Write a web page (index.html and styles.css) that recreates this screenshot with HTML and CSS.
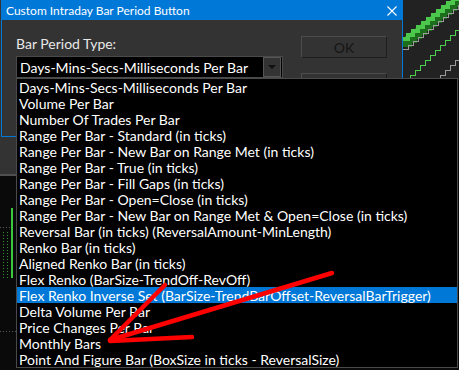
FILE: index.html
```html
<!DOCTYPE html>
<html lang="en">
  <head>
    <meta charset="UTF-8" />
    <meta name="viewport" content="width=device-width, initial-scale=1.0" />
    <title>Custom Intraday Bar Period Button</title>
    <link rel="stylesheet" href="styles.css">
  </head>
  <body>
    <div class="screen">
      <!-- chart window behind the dialog -->
      <svg class="chart" width="459" height="370" viewBox="0 0 459 370" shape-rendering="crispEdges">
        <rect x="0" y="0" width="459" height="370" fill="#0a0a0a" />
        <rect x="403" y="0" width="56" height="80" fill="#222222" />
        <rect x="0" y="0" width="403" height="174" fill="#333333" />
        <rect x="0" y="174" width="403" height="2" fill="#505050" />
        <rect x="11" y="208" width="2" height="70" fill="#3cc83c" />
        <line x1="3.5" y1="232" x2="3.5" y2="278" stroke="#2f8f2f" stroke-dasharray="1 2" />
        <line x1="7.5" y1="232" x2="7.5" y2="278" stroke="#2f8f2f" stroke-dasharray="1 2" />
        <line x1="0" y1="227.5" x2="10" y2="227.5" stroke="#5a5a5a" stroke-dasharray="1 2" />
        <line x1="0" y1="331.5" x2="16" y2="331.5" stroke="#5a5a5a" stroke-dasharray="1 2" />
        <path d="M403 43h5v-4h5v-4h5v-4h5v-4h5v-4h5v-4h5v-4h5v-4h5v-4h5v-4h5v-4h5v-4" fill="none" stroke="#1c6e1c" stroke-width="7" />
        <path d="M403 38.5h5v-4h5v-4h5v-4h5v-4h5v-4h5v-4h5v-4h5v-4h5v-4h5v-4h5v-4h5v-4" fill="none" stroke="#4cc94c" stroke-width="4" />
        <path d="M403 49.5h5v-4h5v-4h5v-4h5v-4h5v-4h5v-4h5v-4h5v-4h5v-4h5v-4h5v-4h5v-4" fill="none" stroke="#9b9b9b" />
        <path d="M405 80.5h5v-5h5v-5h5v-5h5v-5h5v-5h5v-5h5v-5h5v-5h5v-5h5v-5h5v-5" fill="none" stroke="#4ccf4c" />
        <path d="M435 80.5h5v-5h5v-5h5v-5h5v-5h5v-5" fill="none" stroke="#9b9b9b" />
      </svg>

      <div class="dialog">
        <div class="titlebar">
          <span class="title">Custom Intraday Bar Period Button</span>
          <svg class="close" width="10" height="10" viewBox="0 0 10 10">
            <path d="M0.5 0.5L9.5 9.5M9.5 0.5L0.5 9.5" stroke="#ffffff" stroke-width="1.1" />
          </svg>
        </div>
        <div class="dialog-body">
          <div class="field">
            <label class="field-label">Bar Period Type:</label>
            <div class="combo">
              <span class="combo-value">Days-Mins-Secs-Milliseconds Per Bar</span>
              <span class="combo-btn"><span class="caret"></span></span>
            </div>
          </div>
          <div class="buttons">
            <button class="btn">OK</button>
            <button class="btn">Cancel</button>
          </div>
        </div>
      </div>

      <ul class="droplist">
        <li>Days-Mins-Secs-Milliseconds Per Bar</li>
        <li>Volume Per Bar</li>
        <li>Number Of Trades Per Bar</li>
        <li>Range Per Bar - Standard (in ticks)</li>
        <li>Range Per Bar - New Bar on Range Met (in ticks)</li>
        <li>Range Per Bar - True (in ticks)</li>
        <li>Range Per Bar - Fill Gaps (in ticks)</li>
        <li>Range Per Bar - Open=Close (in ticks)</li>
        <li>Range Per Bar - New Bar on Range Met &amp; Open=Close (in ticks)</li>
        <li>Reversal Bar (in ticks) (ReversalAmount-MinLength)</li>
        <li>Renko Bar (in ticks)</li>
        <li>Aligned Renko Bar (in ticks)</li>
        <li>Flex Renko (BarSize-TrendOff-RevOff)</li>
        <li class="selected">Flex Renko Inverse Set (BarSize-TrendBarOffset-ReversalBarTrigger)</li>
        <li>Delta Volume Per Bar</li>
        <li>Price Changes Per Bar</li>
        <li>Monthly Bars</li>
        <li>Point And Figure Bar (BoxSize in ticks - ReversalSize)</li>
      </ul>

      <!-- red annotation arrow -->
      <svg class="arrow" width="459" height="370" viewBox="0 0 459 370">
        <g stroke="#ff0000" stroke-width="4.5" stroke-linecap="round" fill="none">
          <line x1="332" y1="273" x2="110" y2="340" />
          <line x1="165" y1="285" x2="110" y2="340" />
          <line x1="192" y1="337" x2="110" y2="341" />
        </g>
      </svg>
    </div>
  </body>
</html>
```

FILE: styles.css
```css
body {
  margin: 0;
  background-color: #0a0a0a;
  font-family: "Lato", "Liberation Sans", sans-serif;
}

.screen {
  position: relative;
  width: 459px;
  height: 370px;
  overflow: hidden;
}

.chart {
  position: absolute;
  top: 0;
  left: 0;
}

/* dialog window */

.dialog {
  position: relative;
  box-sizing: border-box;
  margin-left: 1px;
  width: 402px;
  height: 137px;
  border: 1px solid #0078d7;
  border-top: none;
  background-color: #333333;
}

.titlebar {
  display: flex;
  align-items: center;
  justify-content: space-between;
  height: 20px;
  padding: 0 5px 0 4px;
  background-color: #0078d7;
  color: #ffffff;
  font-size: 12px;
}

.close {
  display: block;
  margin-top: 1px;
}

.dialog-body {
  display: flex;
  gap: 18px;
  padding: 16px 0 0 14px;
}

.field {
  display: flex;
  flex-direction: column;
  gap: 4px;
  width: 267px;
}

.field-label {
  display: block;
  height: 16px;
  line-height: 16px;
  font-size: 14px;
  color: #e8e8e8;
}

.combo {
  box-sizing: border-box;
  display: flex;
  align-items: center;
  justify-content: space-between;
  height: 22px;
  padding: 0 1px 0 3px;
  border: 1px solid #4a4a4a;
  background-color: #000000;
  color: #ffffff;
  font-size: 14px;
}

.combo-btn {
  box-sizing: border-box;
  display: flex;
  align-items: center;
  justify-content: center;
  width: 18px;
  height: 20px;
  border: 1px solid #555555;
  background-color: #333333;
}

.caret {
  width: 0;
  height: 0;
  border-left: 4px solid transparent;
  border-right: 4px solid transparent;
  border-top: 4px solid #101010;
}

.buttons {
  display: flex;
  flex-direction: column;
  gap: 15px;
}

.btn {
  box-sizing: border-box;
  width: 86px;
  height: 22px;
  padding: 0;
  border: 1px solid #4c4c4c;
  border-right-color: #1e1e1e;
  border-bottom-color: #1e1e1e;
  background-color: #333333;
  color: #151515;
  font-family: "Lato", "Liberation Sans", sans-serif;
  font-size: 14px;
}

/* open dropdown */

.droplist {
  position: absolute;
  top: 78px;
  left: 16px;
  box-sizing: border-box;
  width: 442px;
  height: 290px;
  margin: 0;
  padding: 0;
  list-style: none;
  border: 1px solid #4a4a4a;
  background-color: #000000;
}

.droplist li {
  height: 15px;
  padding: 1px 0 0 2px;
  line-height: 15px;
  font-size: 14px;
  color: #ffffff;
  white-space: nowrap;
}

.droplist li.selected {
  background-color: #0078d7;
}

.arrow {
  position: absolute;
  top: 0;
  left: 0;
  pointer-events: none;
}
```
